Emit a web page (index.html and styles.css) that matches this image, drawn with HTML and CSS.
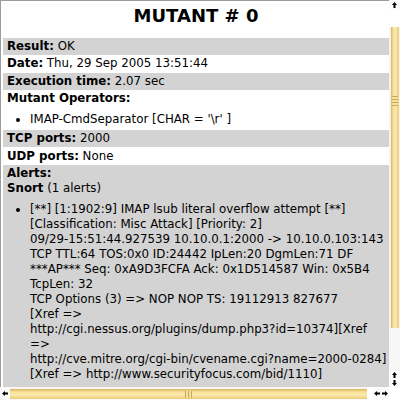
FILE: index.html
```html
<!DOCTYPE html>
<html>
<head>
<meta charset="utf-8">
<link rel="stylesheet" href="styles.css">
</head>
<body>
<div class="frame">
  <div class="content">
    <h1 class="title">MUTANT # 0</h1>
    <div class="row gray"><b>Result:</b> OK</div>
    <div class="row"><b>Date:</b> Thu, 29 Sep 2005 13:51:44</div>
    <div class="row gray"><b>Execution time:</b> 2.07 sec</div>
    <div class="row ops">
      <b>Mutant Operators:</b>
      <ul class="list">
        <li>IMAP-CmdSeparator [CHAR = '\r' ]</li>
      </ul>
    </div>
    <div class="row gray"><b>TCP ports:</b> 2000</div>
    <div class="row"><b>UDP ports:</b> None</div>
    <div class="row gray alerts">
      <b>Alerts:</b><br>
      <b>Snort</b> (1 alerts)
      <ul class="list alert-list">
        <li>[**] [1:1902:9] IMAP lsub literal overflow attempt [**]<br>[Classification: Misc Attack] [Priority: 2]<br>09/29-15:51:44.927539 10.10.0.1:2000 -&gt; 10.10.0.103:143<br>TCP TTL:64 TOS:0x0 ID:24442 IpLen:20 DgmLen:71 DF<br>***AP*** Seq: 0xA9D3FCFA Ack: 0x1D514587 Win: 0x5B4<br>TcpLen: 32<br>TCP Options (3) =&gt; NOP NOP TS: 19112913 827677<br>[Xref =&gt;<br>http://cgi.nessus.org/plugins/dump.php3?id=10374][Xref<br>=&gt;<br>http://cve.mitre.org/cgi-bin/cvename.cgi?name=2000-0284]<br>[Xref =&gt; http://www.securityfocus.com/bid/1110]</li>
      </ul>
    </div>
  </div>
  <div class="vbar">
    <div class="btn">
      <svg width="11" height="10" viewBox="0 0 11 10"><path d="M5.5 2 L8 5 L6.5 5 L6.5 8 L4.5 8 L4.5 5 L3 5 Z" fill="#000"/></svg>
    </div>
    <div class="vtrough-top"></div>
    <div class="vthumb"><div class="vgrip"></div></div>
    <div class="vtrough-bottom"></div>
    <div class="btn">
      <svg width="11" height="8" viewBox="0 0 11 8"><path d="M5.5 1 L8 4 L6.5 4 L6.5 7 L4.5 7 L4.5 4 L3 4 Z" fill="#000"/></svg>
    </div>
    <div class="btn">
      <svg width="11" height="8" viewBox="0 0 11 8"><path d="M5.5 7 L8 4 L6.5 4 L6.5 1 L4.5 1 L4.5 4 L3 4 Z" fill="#000"/></svg>
    </div>
  </div>
  <div class="hbar">
    <div class="hbtn">
      <svg width="10" height="13" viewBox="0 0 10 13"><path d="M2 6.5 L5 4 L5 5.5 L8 5.5 L8 7.5 L5 7.5 L5 9 Z" fill="#000"/></svg>
    </div>
    <div class="hthumb"><div class="hgrip"></div></div>
    <div class="htrough"></div>
    <div class="hbtn">
      <svg width="8" height="13" viewBox="0 0 8 13"><path d="M1 6.5 L4 4 L4 5.5 L7 5.5 L7 7.5 L4 7.5 L4 9 Z" fill="#000"/></svg>
    </div>
    <div class="hbtn">
      <svg width="8" height="13" viewBox="0 0 8 13"><path d="M7 6.5 L4 4 L4 5.5 L1 5.5 L1 7.5 L4 7.5 L4 9 Z" fill="#000"/></svg>
    </div>
  </div>
  <div class="corner"></div>
</div>
</body>
</html>
```
FILE: styles.css
```css
html, body {
  margin: 0;
  padding: 0;
  background: #fff;
}
body {
  font-family: "DejaVu Sans", "Bitstream Vera Sans", sans-serif;
  font-size: 11.8px;
  line-height: 15px;
  color: #000;
}
.frame {
  display: grid;
  grid-template-columns: 389px 11px;
  grid-template-rows: 387px 13px;
  width: 400px;
  height: 400px;
  overflow: hidden;
}
.content {
  border-left: 1px solid #9c9c9c;
  border-top: 1px solid #9c9c9c;
  padding-left: 2px;
  overflow: hidden;
  white-space: nowrap;
}
.title {
  font-size: 18px;
  line-height: normal;
  font-weight: bold;
  text-align: center;
  margin: 4px 0 11.7px;
}
.row {
  padding: 1.25px 4px;
}
.gray {
  background: #d3d3d3;
}
.list {
  margin: 6px 0 0;
  padding-left: 23px;
}
.ops .list {
  margin-bottom: 1.3px;
}
.alerts {
  height: 400px;
}
.vbar {
  display: flex;
  flex-direction: column;
  background: #f4f4f4;
}
.btn {
  display: flex;
  justify-content: center;
  background: #fbfbfb;
}
.vtrough-top {
  height: 17px;
  background: #fff;
}
.vthumb {
  height: 301px;
  margin: 0 1px 0 2px;
  background: linear-gradient(to right, #d8b45c, #f8e39c 30%, #fbe9ab 60%, #e9cb78);
  display: flex;
  align-items: center;
  justify-content: center;
}
.vgrip {
  width: 6px;
  height: 10px;
  margin-top: -154px;
  background: repeating-linear-gradient(to bottom, #c9a958 0 1px, #f6e2a0 1px 3px);
}
.vtrough-bottom {
  flex: 1;
  background: #f7f7f7;
}
.hbar {
  display: flex;
  background: #f7f7f7;
}
.hbtn {
  display: flex;
  align-items: center;
  background: #fbfbfb;
}
.hthumb {
  width: 357px;
  margin: 2px 0 1px;
  background: linear-gradient(to bottom, #d8b45c, #f8e39c 30%, #fbe9ab 60%, #e9cb78);
  display: flex;
  align-items: center;
}
.hgrip {
  width: 8px;
  height: 7px;
  margin-left: 175px;
  background: repeating-linear-gradient(to right, #c9a958 0 1px, #f6e2a0 1px 3px);
}
.htrough {
  flex: 1;
  background: #fff;
}
.corner {
  background: #fff;
}
```
